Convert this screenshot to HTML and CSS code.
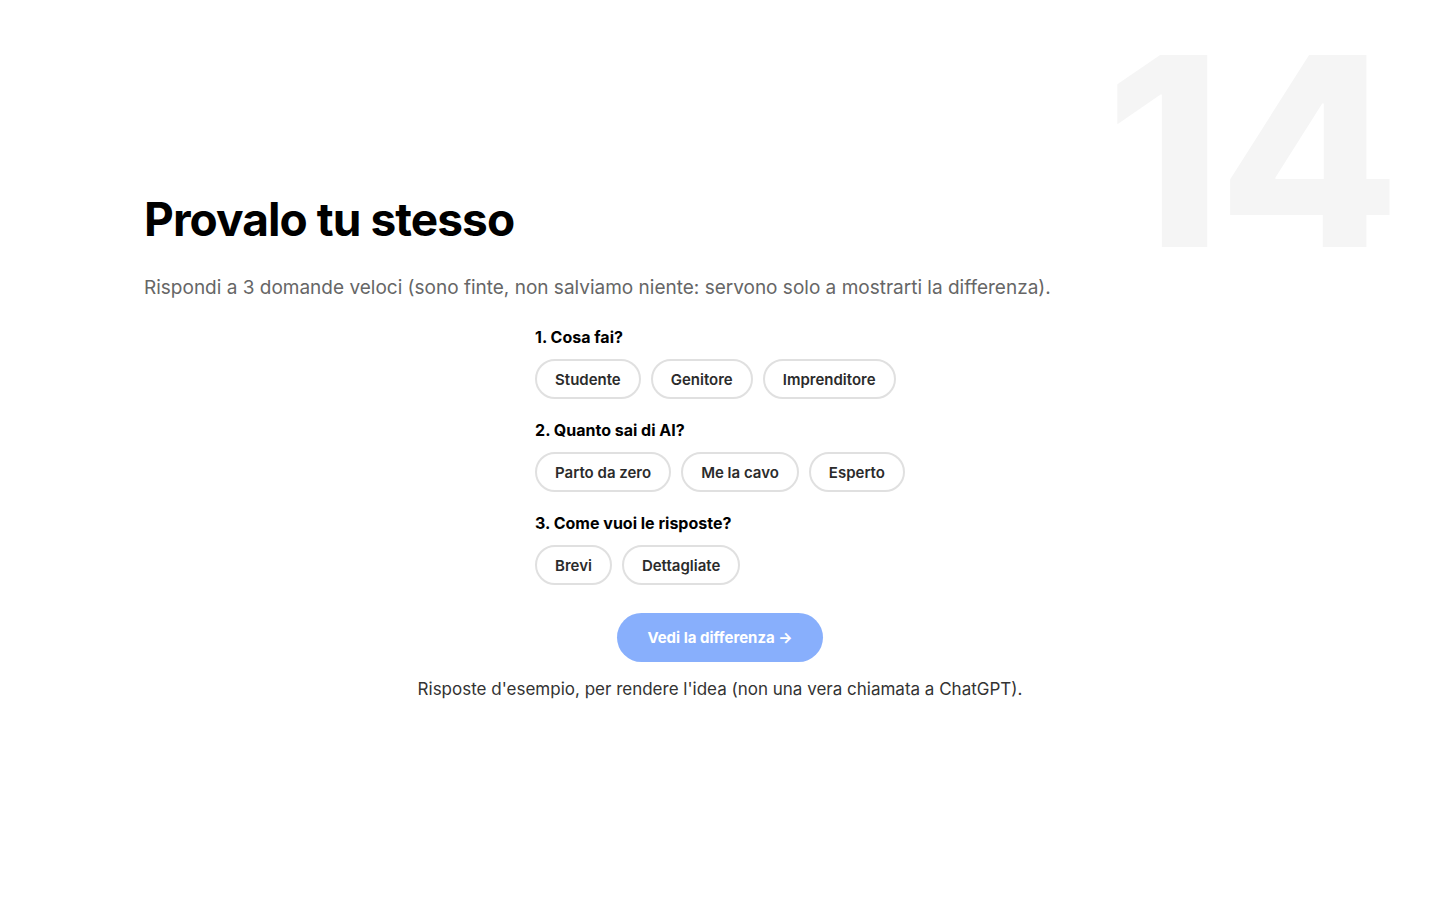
FILE: index.html
```html
<!DOCTYPE html>
<html lang="it">
<head>
    <meta charset="UTF-8">
    <title>Provalo tu stesso</title>
    <link rel="stylesheet" href="styles.css">
</head>
<body>
<section class="step">
    <div class="step-num">14</div>
    <h2 class="step-title">Provalo tu stesso</h2>
    <p class="step-lead">Rispondi a 3 domande veloci (sono finte, non salviamo niente: servono solo a mostrarti la differenza).</p>

    <div class="quiz">
        <div class="question">
            <div class="question-label">1. Cosa fai?</div>
            <div class="options">
                <button class="pill">Studente</button>
                <button class="pill">Genitore</button>
                <button class="pill">Imprenditore</button>
            </div>
        </div>
        <div class="question">
            <div class="question-label">2. Quanto sai di AI?</div>
            <div class="options">
                <button class="pill">Parto da zero</button>
                <button class="pill">Me la cavo</button>
                <button class="pill">Esperto</button>
            </div>
        </div>
        <div class="question">
            <div class="question-label">3. Come vuoi le risposte?</div>
            <div class="options">
                <button class="pill">Brevi</button>
                <button class="pill">Dettagliate</button>
            </div>
        </div>
    </div>

    <div class="actions">
        <button class="go" disabled>Vedi la differenza →</button>
        <p class="note">Risposte d'esempio, per rendere l'idea (non una vera chiamata a ChatGPT).</p>
    </div>
</section>
</body>
</html>
```

FILE: styles.css
```css
body {
    margin: 0;
    background: #fff;
    font-family: Inter, "Noto Sans", sans-serif;
    color: #000;
}

.step {
    position: relative;
    min-height: 900px;
    box-sizing: border-box;
    padding: 191px 144px 0;
}

/* big faded step number behind the heading */
.step-num {
    position: absolute;
    top: -7px;
    right: 40px;
    padding: 0 4px;
    font-size: 264px;
    font-weight: 800;
    line-height: 1.2;
    letter-spacing: -0.015em;
    color: #f5f5f5;
    user-select: none;
}

.step-title {
    position: relative;
    margin: 0;
    font-size: 46px;
    font-weight: 700;
    line-height: 57px;
    letter-spacing: -0.02em;
}

.step-lead {
    position: relative;
    margin: 26px 0 0;
    font-size: 19px;
    line-height: 28px;
    color: #666;
}

.quiz {
    width: fit-content;
    margin: 25px auto 0;
}

.question + .question {
    margin-top: 21px;
}

.question-label {
    font-size: 16px;
    font-weight: 700;
    line-height: 20px;
    margin-bottom: 12px;
}

.options {
    display: flex;
    gap: 10px;
}

.pill {
    height: 40px;
    padding: 0 18px;
    border: 2px solid #e0e0e0;
    border-radius: 999px;
    background: #fff;
    font-family: inherit;
    font-size: 15px;
    font-weight: 600;
    color: #2b2b2b;
    cursor: pointer;
}

.actions {
    margin-top: 28px;
    text-align: center;
}

.go {
    height: 49px;
    padding: 0 30px;
    border: none;
    border-radius: 999px;
    background: #88affc;
    font-family: inherit;
    font-size: 15px;
    font-weight: 700;
    color: #fff;
}

.note {
    margin: 15px 0 0;
    font-size: 17px;
    line-height: 24px;
    color: #333;
}
```
